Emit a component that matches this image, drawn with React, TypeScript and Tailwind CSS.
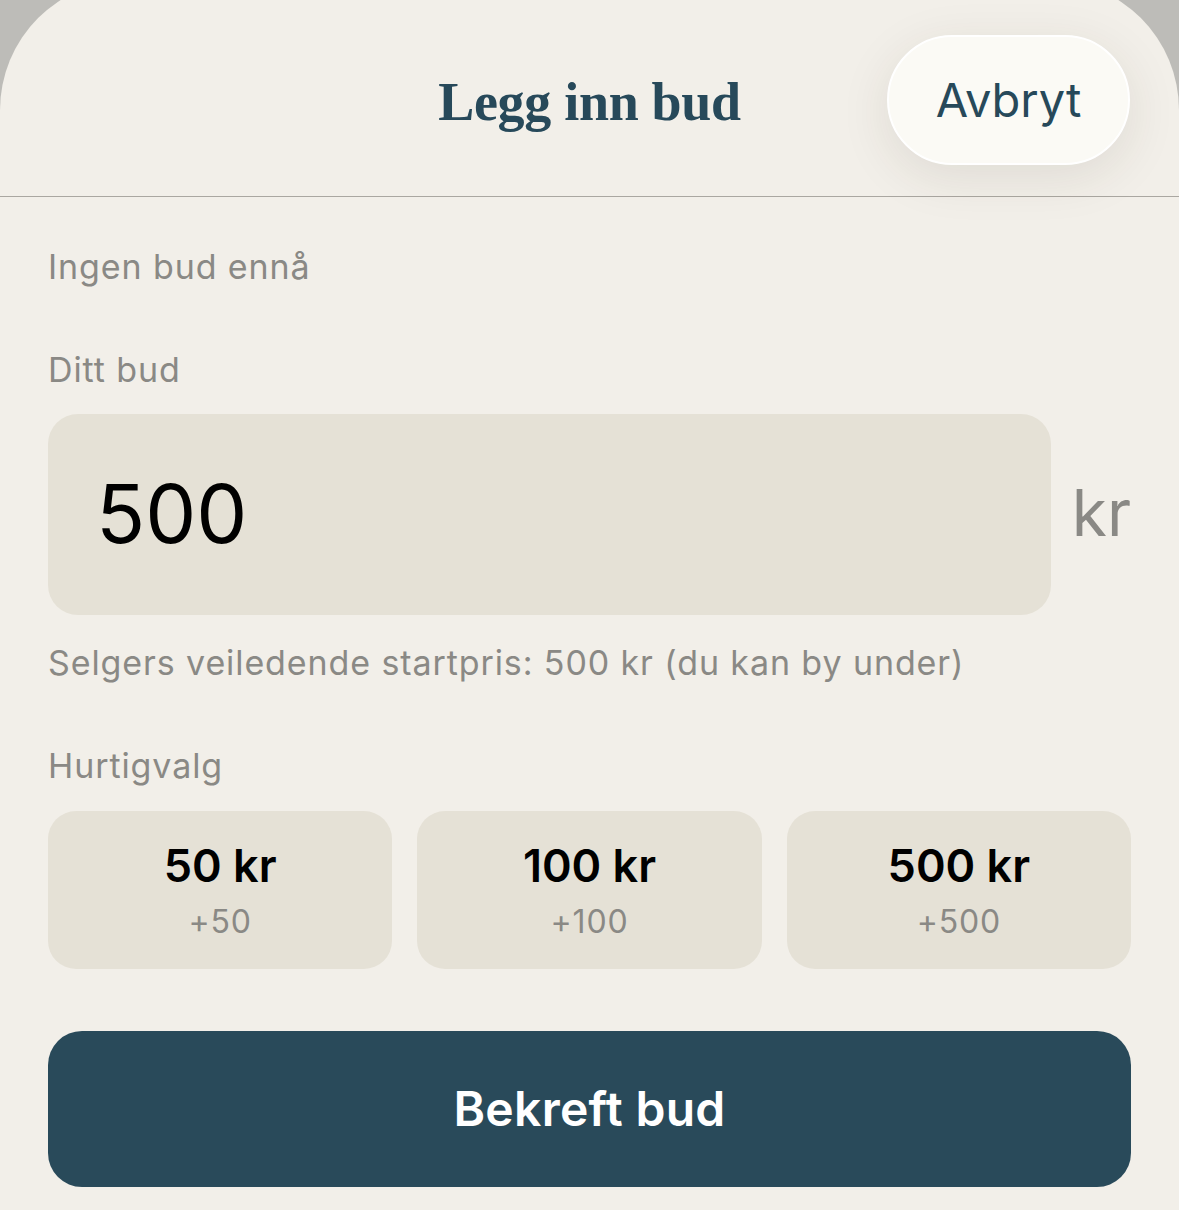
import { useState } from "react";

const QUICK = [50, 100, 500];

export default function App() {
  const [bid, setBid] = useState(500);

  return (
    <div className="min-h-[1210px] bg-[#bdbcb8] overflow-hidden" style={{ fontFamily: "Inter, 'Noto Sans', sans-serif" }}>
      <div className="-mt-5 pt-5 min-h-[1230px] bg-[#f2efe9] rounded-t-[130px]">
        {/* Header */}
        <div className="grid grid-cols-[1fr_auto_1fr] items-center h-[197px] border-b border-[#aaa7a1]">
          <div />
          <h1
            className="pt-[8px] text-[54px] font-bold leading-none tracking-[-0.3px] text-[#27495a]"
            style={{ fontFamily: "'Liberation Serif', 'DejaVu Serif', serif" }}
          >
            Legg inn bud
          </h1>
          <div className="flex justify-end pr-[49px]">
            <button className="mt-[4px] h-[130px] w-[243px] rounded-full bg-[#fbfaf5] border-2 border-white text-[47px] text-[#27495a] shadow-[0_12px_50px_rgba(60,50,30,0.10)]">
              Avbryt
            </button>
          </div>
        </div>

        {/* Body */}
        <div className="px-12 pt-[50px] text-[#8a8985] text-[34px] tracking-[0.9px]">
          <p className="leading-[40px]">Ingen bud ennå</p>

          <p className="mt-[63px] leading-[40px]">Ditt bud</p>

          <div className="mt-[24px] flex items-center gap-[21px] tracking-normal">
            <div className="flex-1 h-[201px] rounded-[30px] bg-[#e5e1d6] flex items-center pl-[48px]">
              <span className="text-[81px] leading-none text-black">{bid}</span>
            </div>
            <span className="text-[64px] leading-none pb-[4px] text-[#8a8985]">kr</span>
          </div>

          <p className="mt-[28px] leading-[40px]">
            Selgers veiledende startpris: 500 kr (du kan by under)
          </p>

          <p className="mt-[63px] leading-[40px]">Hurtigvalg</p>

          <div className="mt-[25px] grid grid-cols-3 gap-[25px] tracking-normal">
            {QUICK.map((q) => (
              <button
                key={q}
                onClick={() => setBid(bid)}
                className="h-[158px] rounded-[28px] bg-[#e5e1d6] flex flex-col items-center justify-center"
              >
                <span className="text-[45px] font-semibold leading-none text-black">{q} kr</span>
                <span className="mt-[18px] text-[32px] tracking-[0.8px] leading-none text-[#8a8985]">+{q}</span>
              </button>
            ))}
          </div>

          <button className="mt-[62px] w-full h-[156px] rounded-[34px] bg-[#294a5a] text-white text-[48px] tracking-[0.3px] font-semibold">
            Bekreft bud
          </button>
        </div>
      </div>
    </div>
  );
}
